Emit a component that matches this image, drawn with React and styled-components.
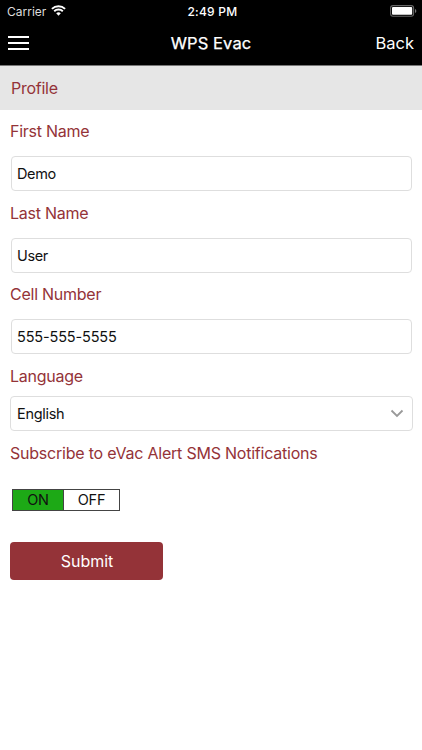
import { useState } from "react"
import styled, { createGlobalStyle } from "styled-components"

const colors = {
    primary: "#943338",
    border: "#dedede",
    green: "#1da916",
}

const textFields = [
    { id: "firstName", label: "First Name", value: "Demo", spacing: "-0.35px" },
    { id: "lastName", label: "Last Name", value: "User", spacing: "-0.4px" },
    { id: "cellNumber", label: "Cell Number", value: "555-555-5555", spacing: "-0.15px" },
]

const WifiIcon = () => (
    <svg width="15" height="11" viewBox="0 0 15 11">
        <path d="M7.5 10.7 5.2 8.3a3.3 3.3 0 0 1 4.6 0Z" fill="#fff" />
        <path d="M3.2 6.3a6.2 6.2 0 0 1 8.6 0M0.9 3.9a9.5 9.5 0 0 1 13.2 0" fill="none" stroke="#fff" strokeWidth="1.9" />
    </svg>
)

const BatteryIcon = () => (
    <svg width="27" height="12" viewBox="0 0 27 12">
        <rect x="0.6" y="0.6" width="23" height="10.6" rx="2.4" fill="none" stroke="#666" strokeWidth="1.1" />
        <rect x="2" y="2" width="20.2" height="7.8" rx="1" fill="#fff" />
        <path d="M25 4v4c1.8-.7 1.8-3.3 0-4Z" fill="#777" />
    </svg>
)

const App = () => {
    const [subscribed, setSubscribed] = useState(true)

    return (
        <>
            <GlobalStyle />
            <StatusBar>
                <Carrier>Carrier <WifiIcon /></Carrier>
                <Clock>2:49 PM</Clock>
                <Battery><BatteryIcon /></Battery>
            </StatusBar>
            <Header>
                <MenuButton aria-label="Menu">
                    <MenuLine />
                    <MenuLine />
                    <MenuLine />
                </MenuButton>
                <Title>WPS Evac</Title>
                <BackButton>Back</BackButton>
            </Header>
            <SectionTitle>Profile</SectionTitle>
            <Form onSubmit={(e) => e.preventDefault()}>
                {textFields.map((field) => (
                    <Field key={field.id}>
                        <Label htmlFor={field.id}>{field.label}</Label>
                        <Input id={field.id} defaultValue={field.value} $spacing={field.spacing} />
                    </Field>
                ))}
                <LanguageField>
                    <Label as="span">Language</Label>
                    <Select type="button">
                        English
                        <svg width="14" height="9" viewBox="0 0 14 9">
                            <path d="m1.5 1.5 5.5 5.5 5.5-5.5" fill="none" stroke="#999" strokeWidth="1.8" />
                        </svg>
                    </Select>
                </LanguageField>
                <SubscribeLabel>Subscribe to eVac Alert SMS Notifications</SubscribeLabel>
                <Toggle>
                    <ToggleOption type="button" $width={50} $active={subscribed} onClick={() => setSubscribed(true)}>ON</ToggleOption>
                    <ToggleOption type="button" $width={56} $active={!subscribed} onClick={() => setSubscribed(false)}>OFF</ToggleOption>
                </Toggle>
                <SubmitButton>Submit</SubmitButton>
            </Form>
        </>
    )
}

export default App

const GlobalStyle = createGlobalStyle`
    * {
        box-sizing: border-box;
    }

    body {
        margin: 0;
        background-color: #fff;
        font-family: Inter, 'Liberation Sans', sans-serif;
    }

    button, input {
        font-family: inherit;
    }

    svg {
        display: block;
    }
`

const StatusBar = styled.div`
    display: grid;
    grid-template-columns: 1fr auto 1fr;
    align-items: center;
    height: 21px;
    padding: 1px 5px 0 7px;
    background-color: #000;
    color: #fff;
`

const Carrier = styled.div`
    display: flex;
    align-items: center;
    gap: 5px;
    font-size: 12px;
    color: #ddd;

    svg {
        margin-top: -1px;
    }
`

const Clock = styled.div`
    padding-left: 1px;
    font-size: 12px;
    font-weight: 500;
    letter-spacing: 0.25px;
`

const Battery = styled.div`
    justify-self: end;
    margin-top: -1px;
`

const Header = styled.header`
    display: grid;
    grid-template-columns: 1fr auto 1fr;
    align-items: center;
    height: 45px;
    padding: 0 8px;
    border-bottom: 1px solid #777;
    background-color: #000;
    color: #fff;
`

const MenuButton = styled.button`
    display: flex;
    flex-direction: column;
    gap: 4px;
    width: 21px;
    padding: 0;
    border: none;
    background: none;
`

const MenuLine = styled.span`
    height: 2px;
    background-color: #fff;
`

const Title = styled.h1`
    margin: 0;
    font-size: 16.5px;
    font-weight: 400;
    letter-spacing: 0.1px;
    -webkit-text-stroke: 0.25px #fff;
`

const BackButton = styled.button`
    justify-self: end;
    padding: 0;
    border: none;
    background: none;
    color: #fff;
    font-size: 16.5px;
`

const SectionTitle = styled.h2`
    height: 44px;
    margin: 0;
    padding-left: 11px;
    background-color: #e6e6e6;
    color: ${colors.primary};
    font-size: 16px;
    font-weight: 400;
    letter-spacing: -0.25px;
    line-height: 45px;
`

const Form = styled.form`
    padding: 0 10px;
`

const Field = styled.div`
    height: 81.5px;
`

const LanguageField = styled.div`
    height: 77px;
`

const Label = styled.label`
    display: block;
    height: 46px;
    color: ${colors.primary};
    font-size: 16px;
    letter-spacing: -0.25px;
    line-height: 42px;

    ${LanguageField} & {
        height: 41.5px;
    }
`

const Input = styled.input`
    display: block;
    width: 401px;
    height: 35px;
    margin: 0 0 0 1px;
    padding: 0 5px;
    border: 1px solid ${colors.border};
    border-radius: 4px;
    outline: none;
    background-color: #fff;
    color: #111;
    font-size: 14.5px;
    letter-spacing: ${(props) => props.$spacing};
`

const Select = styled.button`
    display: flex;
    align-items: center;
    justify-content: space-between;
    width: 403px;
    height: 35px;
    padding: 0 8px 0 6px;
    border: 1px solid ${colors.border};
    border-radius: 4px;
    background-color: #fff;
    color: #111;
    font-size: 14.5px;
    letter-spacing: -0.3px;
`

const SubscribeLabel = styled.p`
    margin: 0;
    height: 57px;
    color: ${colors.primary};
    font-size: 16px;
    letter-spacing: -0.22px;
    line-height: 42px;
    white-space: nowrap;
`

const Toggle = styled.div`
    display: flex;
    width: max-content;
    margin: 0 0 31px 2px;
    border: 1px solid #444;
`

const ToggleOption = styled.button`
    width: ${(props) => props.$width}px;
    height: 20px;
    padding: 0;
    border: none;
    background-color: ${(props) => (props.$active ? colors.green : "#fff")};
    color: #111;
    font-size: 14.5px;
    letter-spacing: -0.2px;
    line-height: 20px;

    & + & {
        border-left: 1px solid #444;
    }
`

const SubmitButton = styled.button`
    display: block;
    width: 153px;
    height: 38px;
    padding: 0 0 0 1px;
    border: none;
    border-radius: 4px;
    background-color: ${colors.primary};
    color: #fff;
    font-size: 16px;
`
